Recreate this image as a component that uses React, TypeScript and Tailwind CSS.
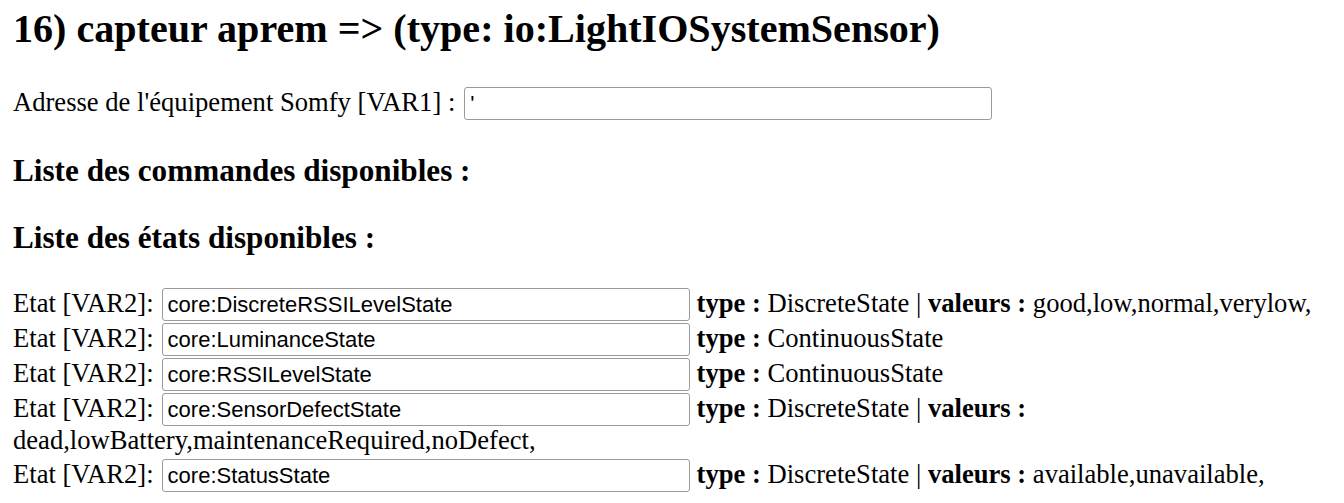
import React from "react";

const serif = "font-['Liberation_Serif','Times_New_Roman',serif]";
const inputCls =
  "h-[33px] w-[528px] shrink-0 rounded-[3px] border border-[#9a9a9a] bg-white pl-[5px] pr-[4px] text-[22px] leading-[25px] text-black font-['Liberation_Sans',Arial,sans-serif] outline-none";

type Row = { state: string; type: string; values?: string; wrap?: boolean };

const rows: Row[] = [
  { state: "core:DiscreteRSSILevelState", type: "DiscreteState", values: "good,low,normal,verylow," },
  { state: "core:LuminanceState", type: "ContinuousState" },
  { state: "core:RSSILevelState", type: "ContinuousState" },
  { state: "core:SensorDefectState", type: "DiscreteState", values: "dead,lowBattery,maintenanceRequired,noDefect,", wrap: true },
  { state: "core:StatusState", type: "DiscreteState", values: "available,unavailable," },
];

function StateRow({ r }: { r: Row }) {
  return (
    <>
      <div className="flex h-[33px] items-baseline whitespace-nowrap">
        <span className="leading-[29px]">Etat [VAR2]:</span>
        <input readOnly value={r.state} className={`${inputCls} ml-[8px]`} />
        <span className="ml-[7px] leading-[29px]">
          <b>type :</b> {r.type}
          {r.values !== undefined && (
            <>
              {" "}| <b>valeurs :</b>
              {!r.wrap && <> {r.values}</>}
            </>
          )}
        </span>
      </div>
      {r.wrap && (
        <div className="mt-[2px] h-[29px] leading-[24px] whitespace-nowrap">{r.values}</div>
      )}
    </>
  );
}

export default function App() {
  return (
    <div className={`${serif} min-h-[503px] w-[1344px] overflow-hidden bg-white pl-[13px] text-[26.6px] text-black`}>
      <h2 className="pt-[6px] text-[40.1px] font-bold leading-[45px] whitespace-nowrap">
        16) capteur aprem =&gt; (type: io:LightIOSystemSensor)
      </h2>
      <div className="mt-[36px] flex h-[33px] items-baseline whitespace-nowrap">
        <span className="leading-[29px]">Adresse de l'équipement Somfy [VAR1] :</span>
        <input readOnly value="'" className={`${inputCls} ml-[9px] text-[#555]`} />
      </div>
      <h3 className="mt-[33px] text-[31.2px] font-bold leading-[36px] whitespace-nowrap">
        Liste des commandes disponibles :
      </h3>
      <h3 className="mt-[31px] text-[31.2px] font-bold leading-[36px] whitespace-nowrap">
        Liste des états disponibles :
      </h3>
      <div className="mt-[32px] flex flex-col">
        {rows.map((r, i) => (
          <div key={i} className={i === 0 ? "" : "mt-[2px]"}>
            <StateRow r={r} />
          </div>
        ))}
      </div>
    </div>
  );
}
